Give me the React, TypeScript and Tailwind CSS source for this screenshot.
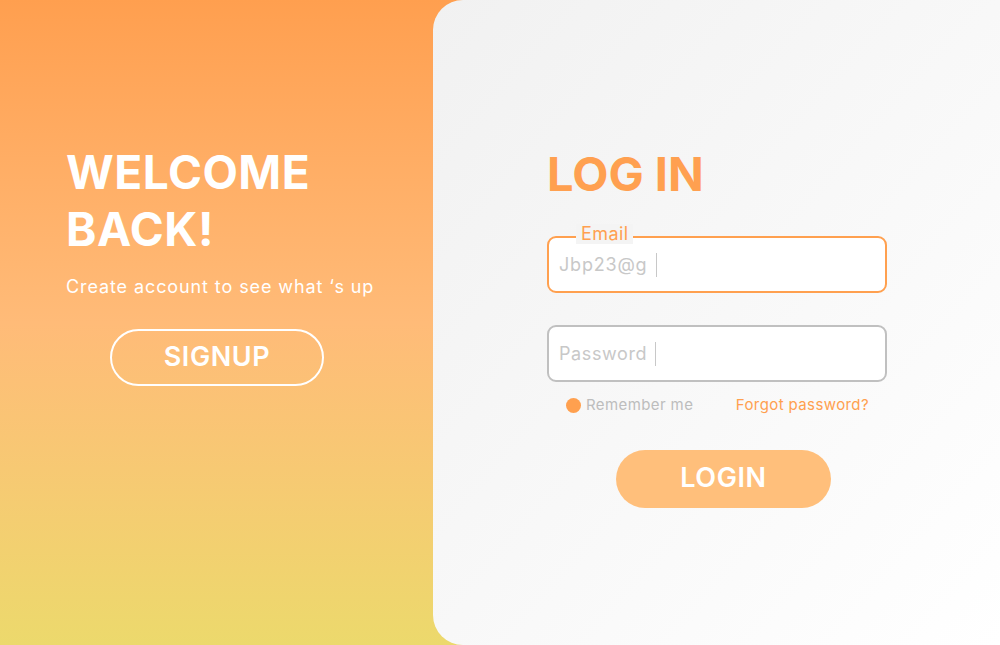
import React from 'react';

export default function App() {
    return (
        <div
            className="flex w-[1000px] h-[645px] overflow-hidden bg-gradient-to-b from-[#ff9f4f] via-[#ffbb78] to-[#ecd96c]"
            style={{ fontFamily: 'Inter, "Noto Sans", sans-serif' }}
        >
            {/* Left: welcome */}
            <div className="w-[433px] shrink-0 flex flex-col pl-[66px] pt-[144px]">
                <h1 className="text-[46px] leading-[57px] font-bold text-white tracking-[0.5px]">
                    WELCOME
                    <br />
                    BACK!
                </h1>
                <p className="mt-[17px] text-[18px] leading-[24px] text-white tracking-[0.9px]">
                    Create account to see what ‘s up
                </p>
                <button className="mt-[30px] ml-[44px] w-[214px] h-[57px] rounded-full border-2 border-white text-white text-[27px] font-semibold tracking-[0.6px]">
                    SIGNUP
                </button>
            </div>

            {/* Right: login card */}
            <div className="flex-1 rounded-l-[30px] bg-gradient-to-br from-[#f1f1f1] to-[#ffffff] pl-[114px] pt-[146px]">
                <h2 className="text-[47px] leading-[56px] font-bold text-[#ffa050]">LOG IN</h2>

                <div className="relative mt-[34px] w-[340px] h-[57px] rounded-[9px] border-2 border-[#ffa04f] bg-white flex items-center px-[10px]">
                    <span className="absolute -top-[14px] left-[27px] px-[5px] bg-[#f4f4f4] text-[18px] leading-[20px] text-[#ffa04f] tracking-[0.4px]">
                        Email
                    </span>
                    <span className="text-[18px] text-[#c8c8c8] tracking-[0.8px]">Jbp23@g</span>
                    <span className="ml-[9px] w-px h-[24px] bg-[#c8c8c8]" />
                </div>

                <div className="mt-[32px] w-[340px] h-[57px] rounded-[9px] border-2 border-[#c0c0c0] bg-white flex items-center px-[10px]">
                    <span className="text-[18px] text-[#c8c8c8] tracking-[0.6px]">Password</span>
                    <span className="ml-[8px] w-px h-[24px] bg-[#c8c8c8]" />
                </div>

                <div className="mt-[12px] flex items-center w-[340px] pl-[19px] text-[15px] tracking-[0.4px]">
                    <span className="w-[15px] h-[15px] rounded-full bg-[#ffa04f]" />
                    <span className="ml-[5px] text-[#bdbdbd]">Remember me</span>
                    <span className="ml-auto mr-[18px] text-[#ffa04f]">Forgot password?</span>
                </div>

                <button className="mt-[33px] ml-[69px] w-[215px] h-[58px] rounded-full bg-[#ffbf7b] text-white text-[27px] font-semibold tracking-[0.6px]">
                    LOGIN
                </button>
            </div>
        </div>
    );
}
